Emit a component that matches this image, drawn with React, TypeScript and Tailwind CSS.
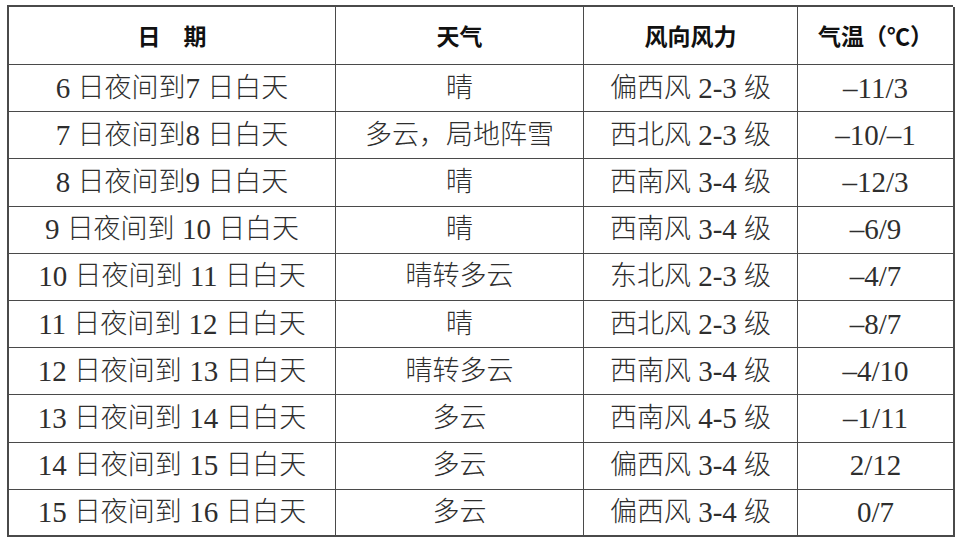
import React from 'react'

const rows: [string, string, string, string][] = [
  ['6 日夜间到7 日白天', '晴', '偏西风 2-3 级', '–11/3'],
  ['7 日夜间到8 日白天', '多云，局地阵雪', '西北风 2-3 级', '–10/–1'],
  ['8 日夜间到9 日白天', '晴', '西南风 3-4 级', '–12/3'],
  ['9 日夜间到 10 日白天', '晴', '西南风 3-4 级', '–6/9'],
  ['10 日夜间到 11 日白天', '晴转多云', '东北风 2-3 级', '–4/7'],
  ['11 日夜间到 12 日白天', '晴', '西北风 2-3 级', '–8/7'],
  ['12 日夜间到 13 日白天', '晴转多云', '西南风 3-4 级', '–4/10'],
  ['13 日夜间到 14 日白天', '多云', '西南风 4-5 级', '–1/11'],
  ['14 日夜间到 15 日白天', '多云', '偏西风 3-4 级', '2/12'],
  ['15 日夜间到 16 日白天', '多云', '偏西风 3-4 级', '0/7'],
]

const headers = ['日　期', '天气', '风向风力', '气温（℃）']

// latin runs (digits, dashes, slashes) are set a bit larger than the CJK text
const Mixed: React.FC<{ text: string }> = ({ text }) => (
  <>
    {text.split(/([0-9–\-/ ]+)/).map((part, i) =>
      /[0-9–\-/]/.test(part) ? (
        <span key={i} className="text-[29px] font-normal">
          {part}
        </span>
      ) : (
        <span key={i}>{part}</span>
      )
    )}
  </>
)

const App: React.FC = () => {
  return (
    <div className="w-[960px] h-[542px] bg-white pt-[5px] pl-[7px]">
      <div
        className="grid grid-cols-[327px_248px_214px_157px] grid-rows-[58px_repeat(10,47.2px)] w-[946px] border-l-2 border-t-2 border-[#4a4a4a]"
        style={{ fontFamily: '"Liberation Serif", "Noto Sans CJK SC", serif' }}
      >
        {/* header row */}
        {headers.map((h, i) => (
          <div
            key={h}
            className={`flex items-center justify-center border-b-[1.5px] border-[#4a4a4a] text-[23px] font-bold text-[#111] ${
              i === 3 ? 'border-r-2' : 'border-r-[1.5px]'
            }`}
            style={{ fontFamily: '"Noto Sans CJK SC", sans-serif' }}
          >
            {h}
          </div>
        ))}

        {/* data rows */}
        {rows.map((row, rIdx) =>
          row.map((cell, cIdx) => (
            <div
              key={`${rIdx}-${cIdx}`}
              className={`flex items-center justify-center whitespace-pre text-[27px] leading-none font-light text-[#2e2e2e] border-[#4a4a4a] ${
                cIdx === 3 ? 'border-r-2' : 'border-r-[1.5px]'
              } ${rIdx === rows.length - 1 ? 'border-b-2' : 'border-b-[1.5px]'}`}
            >
              <Mixed text={cell} />
            </div>
          ))
        )}
      </div>
    </div>
  )
}

export default App
